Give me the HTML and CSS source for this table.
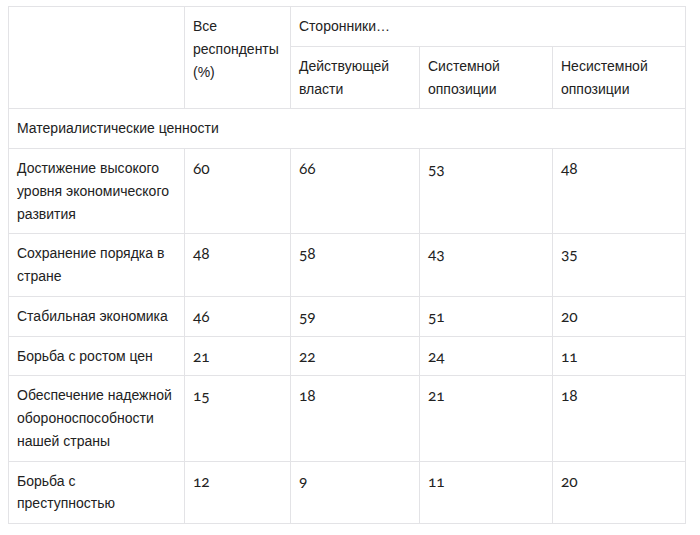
FILE: index.html
```html
<!DOCTYPE html>
<html lang="ru">
<head>
<meta charset="utf-8">
<link rel="stylesheet" href="styles.css">
</head>
<body>
<table class="data">
  <colgroup>
    <col class="c1"><col class="c2"><col class="c3"><col class="c4"><col class="c5">
  </colgroup>
  <tr class="h1">
    <td rowspan="2"></td>
    <td rowspan="2">Все респонденты (%)</td>
    <td colspan="3">Сторонники…</td>
  </tr>
  <tr class="h2">
    <td>Действующей власти</td>
    <td>Системной оппозиции</td>
    <td>Несистемной оппозиции</td>
  </tr>
  <tr><td colspan="5">Материалистические ценности</td></tr>
  <tr><td>Достижение высокого уровня экономического развития</td><td class="n">60</td><td class="n">66</td><td class="n">53</td><td class="n">48</td></tr>
  <tr><td>Сохранение порядка в стране</td><td class="n">48</td><td class="n">58</td><td class="n">43</td><td class="n">35</td></tr>
  <tr><td>Стабильная экономика</td><td class="n">46</td><td class="n">59</td><td class="n">51</td><td class="n">20</td></tr>
  <tr><td>Борьба с ростом цен</td><td class="n">21</td><td class="n">22</td><td class="n">24</td><td class="n">11</td></tr>
  <tr><td>Обеспечение надежной обороноспособности нашей страны</td><td class="n">15</td><td class="n">18</td><td class="n">21</td><td class="n">18</td></tr>
  <tr><td>Борьба с преступностью</td><td class="n">12</td><td class="n">9</td><td class="n">11</td><td class="n">20</td></tr>
</table>
</body>
</html>
```

FILE: styles.css
```css
html, body {
  margin: 0;
  background: #ffffff;
}
body {
  padding: 6px 0 0 8px;
  font-family: "Liberation Sans", Arial, sans-serif;
  font-size: 14px;
  color: #222222;
}
.data {
  border-collapse: collapse;
  table-layout: fixed;
  width: 678px;
}
.c1 { width: 176px; }
.c2 { width: 106px; }
.c3 { width: 129px; }
.c4 { width: 133px; }
.c5 { width: 133px; }
.data td {
  border: 1px solid #e3e3e6;
  padding: 8px;
  line-height: 22.75px;
  vertical-align: top;
  text-align: left;
}
.data td.n {
  font-family: "Lato", "Noto Sans", sans-serif;
  font-variant-numeric: oldstyle-nums;
  font-size: 15.5px;
}
```
